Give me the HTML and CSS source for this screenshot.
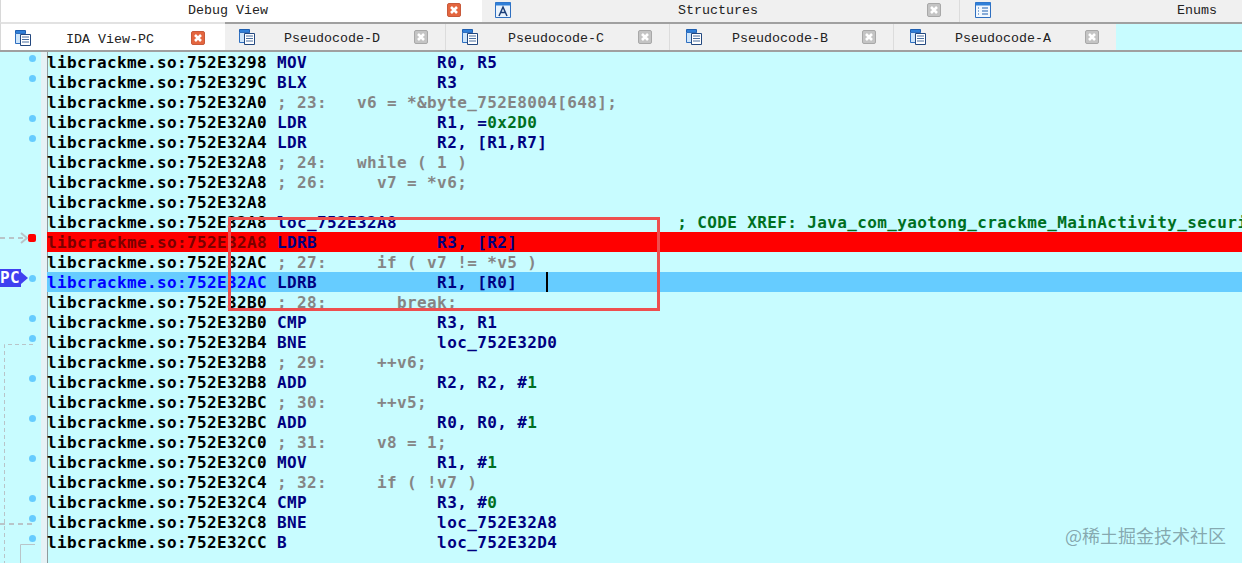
FILE: index.html
```html
<!DOCTYPE html>
<html lang="en">
<head>
<meta charset="utf-8">
<title>IDA View-PC</title>
<link rel="stylesheet" href="styles.css">
</head>
<body>
<svg class="defs" width="0" height="0">
  <symbol id="i-doc" viewBox="0 0 16 16">
    <path d="M.5.5h10v3H.5z" fill="#2f7fd8" stroke="#1f5fb0"/>
    <path d="M.5 3.5h10v10H.5z" fill="#cfe6fb" stroke="#2f6fc0"/>
    <path d="M5.5 4.5h10v11h-10z" fill="#fff" stroke="#23487f"/>
    <path d="M7 7h7M7 9.500h7M7 12h7" stroke="#4a6f9f"/>
  </symbol>
  <symbol id="i-struct" viewBox="0 0 16 16">
    <path d="M.5.500h15v15H.5z" fill="#eaf3fc" stroke="#2f6fc0"/>
    <path d="M.5.500h15v3H.5z" fill="#2f7fd8"/>
    <path d="M4 14 8 5l4 9M5.500 10.500h5" fill="none" stroke="#1c3f78" stroke-width="1.500"/>
  </symbol>
  <symbol id="i-enum" viewBox="0 0 16 16">
    <path d="M.5.500h15v15H.5z" fill="#f2f8fe" stroke="#2f6fc0"/>
    <path d="M.5.500h15v3H.5z" fill="#2f7fd8"/>
    <path d="M3 6h2M3 9h2M3 12h2" stroke="#1c5fb0" stroke-dasharray="1 1"/>
    <path d="M7 6h6M7 9h6M7 12h6" stroke="#1c5fb0"/>
  </symbol>
  <symbol id="i-close" viewBox="0 0 14 14">
    <path d="M3.500 3.500l7 7M10.500 3.500l-7 7" stroke="#fff" stroke-width="3"/>
  </symbol>
</svg>

<div class="tabs tabs-top">
  <div class="tab tab-active tab-debug">
    <span class="tab-label">Debug View</span>
    <svg class="close close-hot"><use href="#i-close"/></svg>
  </div>
  <div class="tab tab-struct">
    <svg class="icon"><use href="#i-struct"/></svg>
    <span class="tab-label">Structures</span>
    <svg class="close"><use href="#i-close"/></svg>
  </div>
  <div class="tab tab-enum">
    <svg class="icon"><use href="#i-enum"/></svg>
    <span class="tab-label">Enums</span>
  </div>
</div>

<div class="tabs tabs-second">
  <div class="tab tab-view tab-active">
    <svg class="icon"><use href="#i-doc"/></svg>
    <span class="tab-label">IDA View-PC</span>
    <svg class="close close-hot"><use href="#i-close"/></svg>
  </div>
  <div class="tab tab-view tab-d">
    <svg class="icon"><use href="#i-doc"/></svg>
    <span class="tab-label">Pseudocode-D</span>
    <svg class="close"><use href="#i-close"/></svg>
  </div>
  <div class="tab tab-view">
    <svg class="icon"><use href="#i-doc"/></svg>
    <span class="tab-label">Pseudocode-C</span>
    <svg class="close"><use href="#i-close"/></svg>
  </div>
  <div class="tab tab-view">
    <svg class="icon"><use href="#i-doc"/></svg>
    <span class="tab-label">Pseudocode-B</span>
    <svg class="close"><use href="#i-close"/></svg>
  </div>
  <div class="tab tab-view tab-a">
    <svg class="icon"><use href="#i-doc"/></svg>
    <span class="tab-label">Pseudocode-A</span>
    <svg class="close"><use href="#i-close"/></svg>
  </div>
</div>

<main class="listing">
  <div class="row"><i class="dot"></i><code class="line">libcrackme.so:752E3298 <b>MOV             R0, R5</b></code></div>
  <div class="row"><i class="dot"></i><code class="line">libcrackme.so:752E329C <b>BLX             R3</b></code></div>
  <div class="row"><code class="line">libcrackme.so:752E32A0 <em>; 23:   v6 = *&amp;byte_752E8004[648];</em></code></div>
  <div class="row"><i class="dot"></i><code class="line">libcrackme.so:752E32A0 <b>LDR             R1, =</b><u>0x2D0</u></code></div>
  <div class="row"><i class="dot"></i><code class="line">libcrackme.so:752E32A4 <b>LDR             R2, [R1,R7]</b></code></div>
  <div class="row"><code class="line">libcrackme.so:752E32A8 <em>; 24:   while ( 1 )</em></code></div>
  <div class="row"><code class="line">libcrackme.so:752E32A8 <em>; 26:     v7 = *v6;</em></code></div>
  <div class="row"><code class="line">libcrackme.so:752E32A8</code></div>
  <div class="row"><code class="line">libcrackme.so:752E32A8 <b>loc_752E32A8</b>                            <u>; CODE XREF: Java_com_yaotong_crackme_MainActivity_securi</u></code></div>
  <div class="row row-break"><i class="dot dot-break"></i><code class="line">libcrackme.so:752E32A8 <b>LDRB            R3, [R2]</b></code></div>
  <div class="row"><code class="line">libcrackme.so:752E32AC <em>; 27:     if ( v7 != *v5 )</em></code></div>
  <div class="row row-pc"><i class="dot"></i><code class="line">libcrackme.so:752E32AC <b>LDRB            R1, [R0]</b></code><i class="caret"></i></div>
  <div class="row"><code class="line">libcrackme.so:752E32B0 <em>; 28:       break;</em></code></div>
  <div class="row"><i class="dot"></i><code class="line">libcrackme.so:752E32B0 <b>CMP             R3, R1</b></code></div>
  <div class="row"><i class="dot"></i><code class="line">libcrackme.so:752E32B4 <b>BNE             loc_752E32D0</b></code></div>
  <div class="row"><code class="line">libcrackme.so:752E32B8 <em>; 29:     ++v6;</em></code></div>
  <div class="row"><i class="dot"></i><code class="line">libcrackme.so:752E32B8 <b>ADD             R2, R2, #</b><u>1</u></code></div>
  <div class="row"><code class="line">libcrackme.so:752E32BC <em>; 30:     ++v5;</em></code></div>
  <div class="row"><i class="dot"></i><code class="line">libcrackme.so:752E32BC <b>ADD             R0, R0, #</b><u>1</u></code></div>
  <div class="row"><code class="line">libcrackme.so:752E32C0 <em>; 31:     v8 = 1;</em></code></div>
  <div class="row"><i class="dot"></i><code class="line">libcrackme.so:752E32C0 <b>MOV             R1, #</b><u>1</u></code></div>
  <div class="row"><code class="line">libcrackme.so:752E32C4 <em>; 32:     if ( !v7 )</em></code></div>
  <div class="row"><i class="dot"></i><code class="line">libcrackme.so:752E32C4 <b>CMP             R3, #</b><u>0</u></code></div>
  <div class="row"><i class="dot"></i><code class="line">libcrackme.so:752E32C8 <b>BNE             loc_752E32A8</b></code></div>
  <div class="row"><i class="dot"></i><code class="line">libcrackme.so:752E32CC <b>B               loc_752E32D4</b></code></div>

  <svg class="flow" width="46" height="511" viewBox="0 0 46 511">
    <path d="M0 186h26" stroke="#b9c4c8" stroke-width="2" stroke-dasharray="5 4" fill="none"/>
    <path d="M21 181l6 5-6 5" stroke="#b9c4c8" stroke-width="2" fill="none"/>
    <path d="M33 292.500H4.500V511" stroke="#b9c4c8" stroke-dasharray="4 3" fill="none"/>
    <path d="M0 472h33" stroke="#b9c4c8" stroke-width="2" stroke-dasharray="5 4" fill="none"/>
    <path d="M35 492.500H20.500V511" stroke="#b9c4c8" fill="none"/>
  </svg>
  <div class="pc-badge">PC</div>
  <div class="marker"></div>
  <div class="watermark">@稀土掘金技术社区</div>
</main>
```
FILE: styles.css
```css
* { box-sizing: border-box; }
html, body { margin: 0; height: 100%; overflow: hidden; }
body { background: #c8fcff; width: 1242px; height: 563px; position: relative; }
.defs { position: absolute; }

.tabs { display: flex; font: 13.33px/1 "Liberation Mono", monospace; color: #222; }
.tabs-top { height: 24px; background: #f0f0f0; border-bottom: 2px solid #a0a0a0; }
.tabs-second { height: 28px; border-bottom: 2px solid #a0a0a0; }

.tab { display: flex; align-items: center; position: relative; background: #f0f0f0; border-right: 1px solid #dcdcdc; }
.tab-active { background: #fff; }
.tabs-top .tab { padding-bottom: 2px; }
.tabs-top .tab-label { margin-top: 2px; }
.tabs-second .tab-label { margin-top: 4px; }
.tab-debug { width: 482px; border-right: 0; border-left: 1px solid #d8d8d8; }
.tab-struct { width: 478px; }
.tab-enum { flex: 1; border-right: 0; }

.tab-view { width: 224px; padding-left: 16px; }
.tab-d { width: 221px; padding-left: 14px; }
.tab-a { width: 222px; border-right: 0; }
.tab-view.tab-active { width: 225px; height: 28px; margin-top: -2px; padding-left: 14px; padding-top: 2px; border-right: 0; border-left: 1px solid #d8d8d8; border-top: 2px solid #e2e2e2; }

.icon { width: 16px; height: 16px; flex: none; }
.close { width: 14px; height: 14px; flex: none; background: #c4c4c4; border: 1px solid #a8a8a8; border-radius: 2px; }
.close-hot { background: #e4663f; border-color: #c85a3c; }

.tab-view .tab-label { margin-left: 30px; width: 130px; }
.tab-d .tab-label, .tab-a .tab-label { margin-left: 29px; }
.tab-view.tab-active .tab-label { margin-left: 35px; width: 125px; }
.tab-debug .tab-label { margin-left: 187px; width: 259px; }
.tab-struct .icon { margin-left: 13px; }
.tab-struct .tab-label { margin-left: 167px; width: 249px; }
.tab-enum .icon { margin-left: 15px; }
.tab-enum .tab-label { margin-left: 186px; }

.listing { position: relative; height: 511px; }
.listing::before { content: ""; position: absolute; left: 41px; top: 0; bottom: 0; width: 6px; background: #e6f2f6; border-right: 1px solid #8f9a9c; }

.row { display: flex; height: 20px; padding-left: 47px; position: relative; }
.row-break { background: linear-gradient(#f00, #f00) 47px 0 no-repeat; }
.row-pc { background: linear-gradient(#66ccff, #66ccff) 47px 0 no-repeat; }

.line { padding-top: 1px; white-space: pre; font: 700 16px/20px "DejaVu Sans Mono", monospace; letter-spacing: .37px; color: #000; }
.line b { color: #000080; font-weight: 700; }
.line em { color: #858585; font-style: normal; }
.line u { color: #006f1f; text-decoration: none; }
.row-break .line { color: #7a0000; }
.row-pc .line { color: #0000ff; }

.dot { position: absolute; left: 29px; top: 3px; width: 7px; height: 7px; border-radius: 50%; background: #66ccff; }
.dot-break { left: 28px; top: 2px; width: 8px; height: 8px; background: #f00; border-radius: 2px; }
.caret { position: absolute; left: 546px; top: 0; width: 2px; height: 20px; background: #000; }

.flow { position: absolute; left: 0; top: 0; }
.pc-badge { position: absolute; left: 0; top: 217px; width: 21px; height: 18px; background: #4040f0; color: #fff; font: 700 16px/18px "DejaVu Sans Mono", monospace; letter-spacing: .37px; }
.pc-badge::after { content: ""; position: absolute; left: 21px; top: 3px; border-left: 7px solid #4040f0; border-top: 6px solid transparent; border-bottom: 6px solid transparent; }
.marker { position: absolute; left: 228px; top: 165px; width: 432px; height: 94px; border: 3px solid #ee4f4f; }
.watermark { position: absolute; left: 1065px; top: 472px; font: 18px/22px "Noto Sans CJK SC", sans-serif; color: rgba(95, 120, 130, .65); white-space: nowrap; }
```
